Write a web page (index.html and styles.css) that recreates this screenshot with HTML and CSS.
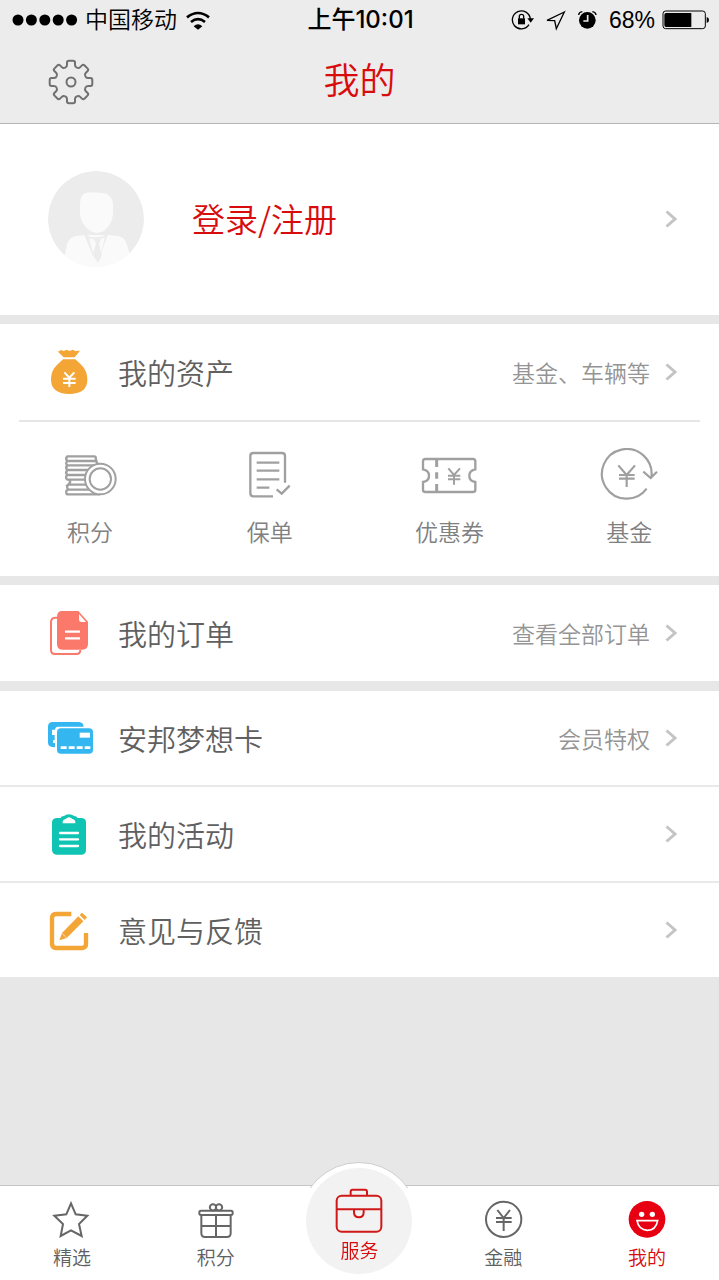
FILE: index.html
```html
<!DOCTYPE html>
<html lang="zh-CN">
<head>
<meta charset="utf-8">
<meta name="viewport" content="width=device-width, initial-scale=1">
<title>我的</title>
<link rel="stylesheet" href="styles.css">
</head>
<body>
<header class="top">
  <div class="status">
    <div class="status-left">
      <svg class="signal" viewBox="0 0 66 12" aria-hidden="true"><circle cx="6" cy="6" r="5.5"/><circle cx="19.4" cy="6" r="5.5"/><circle cx="32.8" cy="6" r="5.5"/><circle cx="46.2" cy="6" r="5.5"/><circle cx="59.6" cy="6" r="5.5"/></svg>
      <span>中国移动</span>
      <svg class="wifi" viewBox="558 28 72 57" fill="none" stroke="#000" stroke-width="8" aria-hidden="true"><path d="M561 47Q594 21 627 47M573 61Q594 44 615 61"/><path d="M581 74Q594 62 607 74L594 84Z" fill="#000" stroke="none"/></svg>
    </div>
    <span class="time">上午10:01</span>
    <div class="status-right">
      <svg class="s-lock" viewBox="666 26 69 66" fill="none" stroke="#000" stroke-width="4" aria-hidden="true"><path d="M720 73A27 27 0 1 1 724 56"/><path d="M715 54H735L725 67Z" fill="#000" stroke="none"/><path d="M687 54H708V72H687Z" fill="#000" stroke="none"/><path d="M691 55V48Q691 42 697.500 42Q704 42 704 48V55"/></svg>
      <svg class="s-arrow" viewBox="768 26 63 63" fill="none" stroke="#000" stroke-width="4" aria-hidden="true"><path d="M826 32L774 57L797 58L802 82Z"/></svg>
      <svg class="s-alarm" viewBox="861 28 60 60" aria-hidden="true"><circle cx="892" cy="59" r="25"/><path d="M866 43Q867 34 877 33M907 33Q917 34 918 43" fill="none" stroke="#000" stroke-width="4"/><path d="M893 43V61H880" fill="none" stroke="#ececec" stroke-width="5"/></svg>
      <span>68%</span>
      <svg class="battery" viewBox="1113 29 141 60" aria-hidden="true"><rect x="1116" y="32" width="127" height="53" rx="8" fill="none" stroke="#000" stroke-width="3"/><path d="M1125 38H1201V80H1125Q1120 80 1120 75V43Q1120 38 1125 38ZM1247 50Q1254 52 1254 59Q1254 66 1247 68Z"/></svg>
    </div>
  </div>
  <div class="nav">
    <button class="settings" type="button" aria-label="设置">
      <svg viewBox="-23 -23 46 46" fill="none" stroke="#707070" stroke-width="2">
        <defs><path id="tooth" d="M-5.900-14.300Q-4-15-4-17V-19.500Q-4-21.300-2-21.300H2Q4-21.300 4-19.500V-17Q4-15 5.900-14.300"/></defs>
        <use href="#tooth"/><use href="#tooth" transform="rotate(45)"/><use href="#tooth" transform="rotate(90)"/><use href="#tooth" transform="rotate(135)"/><use href="#tooth" transform="rotate(180)"/><use href="#tooth" transform="rotate(225)"/><use href="#tooth" transform="rotate(270)"/><use href="#tooth" transform="rotate(315)"/>
        <circle r="4.500"/>
      </svg>
    </button>
    <h1>我的</h1>
  </div>
</header>

<main>
  <a class="profile" href="#login">
    <svg class="avatar" viewBox="0 0 96 96" aria-hidden="true">
      <defs><clipPath id="disc"><circle cx="48" cy="48" r="48"/></clipPath></defs>
      <g clip-path="url(#disc)"><circle cx="48" cy="48" r="48" fill="#ececec"/>
      <path d="M37 22Q48 20 59 23Q65 27 65 34V43Q64 53 57 59Q49 65 41 59Q33 53 32 43V33Q32 25 37 22Z" fill="#fafafa"/>
      <path d="M14 96L19 74Q20 67 28 65L37 64L60 64L70 65Q77 66 79 74L86 96Z" fill="#fafafa"/><path d="M36 63Q48 70 60 63L51 88L53 84L50 74L53 68H45L48 74L45 84L46 88Z" fill="#ececec"/><path d="M46 68H53L51 73L54 84L50 92L45 84L48 73Z" fill="#ececec"/><path d="M41 67L45 68L48 73L45 82ZM57 66L53 68L51 73L53 82Z" fill="#fafafa"/></g>
    </svg>
    <span class="login">登录/注册</span>
    <svg class="chevron" viewBox="0 0 12 18" aria-hidden="true"><path d="M1.500 1.500L10 9L1.500 16.500"/></svg>
  </a>

  <section class="card">
    <a class="row" href="#assets">
      <svg class="icon" viewBox="54 57 138 138" aria-hidden="true"><path d="M84 65L93 60L101 63L110 59L119 63L128 59L136 63L150 62L134 82H101ZM99 88H136L155 106Q172 122 172 151Q171 192 117 192Q64 191 63 150Q63 122 80 106Z" fill="#f3a536"/><path d="M103 127L118 143L133 127M118 143V171M99 146H137M99 159H137" fill="none" stroke="#fff" stroke-width="6"/></svg>
      <span class="name">我的资产</span><span class="hint">基金、车辆等</span>
      <svg class="chevron" viewBox="0 0 12 18" aria-hidden="true"><path d="M1.500 1.500L10 9L1.500 16.500"/></svg>
    </a>
    <nav class="grid" aria-label="我的资产">
      <a href="#points"><svg viewBox="90 354 180 162" aria-hidden="true"><path d="M112 379H193Q198 379 197 384L200 397Q205 402 201 406H112Q105 400 112 393Q105 386 112 379ZM112 393H198M112 406H190M112 406Q105 413 112 420H176M112 420Q105 428 112 435H171M112 435Q104 442 112 449H169M112 449H118Q124 457 115 464H172M115 464Q107 472 116 479H181M116 479Q107 480 109 487Q108 493 115 493H210" stroke-width="7"/><circle cx="211" cy="447" r="46" fill="#fff" stroke-width="6"/><circle cx="211" cy="447" r="32" stroke-width="6"/></svg><span>积分</span></a>
      <a href="#policy"><svg viewBox="27 54 180 162" aria-hidden="true"><path d="M126 199H67Q58 199 58 190V78Q58 69 67 69H153Q162 69 162 78V158M77 98H145M77 122H145M77 148H145M77 173H115" stroke-width="7"/><path d="M137 178L152 191L176 167" stroke-width="7"/></svg><span>保单</span></a>
      <a href="#coupon"><svg viewBox="567 54 180 162" aria-hidden="true"><path d="M586 87H729Q736 87 736 94V118Q718 121 718 137Q718 153 736 156V180Q736 186 729 186H586Q579 186 579 180V156Q597 153 597 137Q597 121 579 118V94Q579 87 586 87Z" stroke-width="7"/><path d="M620 89V111M620 127V146M620 162V185" stroke-width="9"/><path d="M655 115L672 135L690 115M672 135V164M654 137H691M654 148H691" stroke-width="6"/></svg><span>优惠券</span></a>
      <a href="#fund"><svg viewBox="294 324 180 162" aria-hidden="true"><path d="M437 446A74.500 74.500 0 1 1 451 412M427 395L449 414L468 395M352 376L377 405L402 376M377 405V441M354 405H401M354 416H401" stroke-width="6.500"/></svg><span>基金</span></a>
    </nav>
  </section>

  <section class="card">
    <a class="row" href="#orders">
      <svg class="icon" viewBox="54 60 138 138" aria-hidden="true"><path d="M84 83H75Q63 84 63 96V180Q63 192 75 192H139Q151 192 151 180" fill="none" stroke="#fb796b" stroke-width="6"/><path d="M96 63H145L174 95V162Q174 179 157 179H96Q81 179 81 162V80Q81 63 96 63Z" fill="#fb796b"/><path d="M147 72V89Q147 95 153 96H168Z" fill="#fff"/><path d="M105 125H150M105 145H150" stroke="#fff" stroke-width="7"/></svg>
      <span class="name">我的订单</span><span class="hint">查看全部订单</span>
      <svg class="chevron" viewBox="0 0 12 18" aria-hidden="true"><path d="M1.500 1.500L10 9L1.500 16.500"/></svg>
    </a>
  </section>

  <section class="card lined">
    <a class="row" href="#card">
      <svg class="icon" viewBox="54 376 138 138" aria-hidden="true"><path d="M66 397H147Q160 398 161 411H84Q76 411 75 420H66V436H74V452H69V460H75V473Q55 473 54 460V410Q55 398 66 397Z" fill="#34b7f1"/><rect x="81" y="416" width="108" height="76" rx="12" fill="#34b7f1"/><path d="M149 429H180V444H149Z" fill="#fff"/><path d="M92 474H181" stroke="#fff" stroke-width="8" stroke-dasharray="18 6"/></svg>
      <span class="name">安邦梦想卡</span><span class="hint">会员特权</span>
      <svg class="chevron" viewBox="0 0 12 18" aria-hidden="true"><path d="M1.500 1.500L10 9L1.500 16.500"/></svg>
    </a>
    <a class="row" href="#events">
      <svg class="icon" viewBox="54 94 138 138" aria-hidden="true"><path d="M92 115Q93 109 102 109Q107 104 117 104Q127 104 132 109Q141 109 142 115H155Q168 116 168 128V211Q168 224 155 225H79Q67 224 66 211V128Q67 116 79 115Z" fill="#0fc4b3"/><path d="M98 131Q97 119 107 118Q117 107 127 118Q137 119 136 131Z" fill="#fff"/><path d="M90 160H144M90 179H144M90 199H144" stroke="#fff" stroke-width="7" stroke-linecap="round"/></svg>
      <span class="name">我的活动</span>
      <svg class="chevron" viewBox="0 0 12 18" aria-hidden="true"><path d="M1.500 1.500L10 9L1.500 16.500"/></svg>
    </a>
    <a class="row" href="#feedback">
      <svg class="icon" viewBox="54 381 138 138" aria-hidden="true"><path d="M124 402H78Q66 403 66 414V492Q67 503 78 504H157Q168 503 168 492V459" fill="none" stroke="#f3a536" stroke-width="13"/><path d="M88 481L96 459L145 409L160 424L110 474ZM149 405L156 398L171 412L164 420Z" fill="#f3a536"/><path d="M96 460L109 473" stroke="#fff" stroke-width="2"/></svg>
      <span class="name">意见与反馈</span>
      <svg class="chevron" viewBox="0 0 12 18" aria-hidden="true"><path d="M1.500 1.500L10 9L1.500 16.500"/></svg>
    </a>
  </section>
</main>

<nav class="tabs" aria-label="主导航">
  <a class="tab" href="#picks"><svg viewBox="153 147 126 126" aria-hidden="true"><path d="M213 160L227 193L262 197L237 222L245 258L213 241L182 258L189 222L163 197L199 193Z"/></svg><span>精选</span></a>
  <a class="tab" href="#gifts"><svg viewBox="584 147 126 126" aria-hidden="true"><rect x="597" y="182" width="100" height="13" rx="5"/><path d="M603 196V250Q603 261 614 261H680Q691 261 691 250V196M647 195V261M603 228H691"/><circle cx="638" cy="172" r="9.500"/><circle cx="656" cy="172" r="9.500"/></svg><span>积分</span></a>
  <a class="tab service" href="#service"><span class="bubble"><svg viewBox="134 110 150 144" aria-hidden="true"><rect x="142" y="136" width="134" height="108" rx="15"/><path d="M184 135V124Q184 118 190 118H227Q233 118 233 124V135M142 177H276M194 178V186Q194 201 209 201Q223 201 223 186V178"/></svg><span>服务</span></span></a>
  <a class="tab" href="#finance"><svg viewBox="67 147 126 126" aria-hidden="true"><circle cx="132" cy="208" r="53"/><path d="M113 180L132 204L151 180M132 204V243M109 204H156M109 216H156"/></svg><span>金融</span></a>
  <a class="tab active" href="#me" aria-current="page"><svg viewBox="498 147 126 126" aria-hidden="true"><circle cx="561" cy="208" r="55" fill="#e60012" stroke="none"/><circle cx="545" cy="193" r="8" fill="#fff" stroke="none"/><circle cx="577" cy="193" r="8" fill="#fff" stroke="none"/><path d="M531 212H593Q588 241 562 241Q536 240 531 212Z" stroke="#fff" stroke-width="5"/></svg><span>我的</span></a>
</nav>
</body>
</html>
```
FILE: styles.css
```css
* { box-sizing: border-box; }

body {
  margin: 0;
  min-height: 100vh;
  display: flex;
  flex-direction: column;
  background: #e7e7e7;
  color: #606060;
  font-family: "Noto Sans CJK SC", sans-serif;
  font-weight: 350;
}

a { color: inherit; text-decoration: none; }
svg { display: block; flex: none; }

/* Status bar and title */
.top { background: #ececec; border-bottom: 1px solid #b4b4b4; }

.status {
  display: grid;
  grid-template-columns: 1fr auto 1fr;
  align-items: center;
  height: 40px;
  padding: 0 10px 0 12px;
  color: #000;
  font-family: "Liberation Sans", "Noto Sans CJK SC", sans-serif;
  font-size: 23px;
  line-height: 40px;
}
.status-left, .status-right { display: flex; align-items: center; gap: 7px; }
.status-right { justify-content: flex-end; }
.time { font-family: Inter, "Noto Sans CJK SC", sans-serif; font-size: 24px; font-weight: 500; }
.signal { width: 66px; height: 12px; }
.wifi { width: 24px; height: 19px; margin-left: 2px; }
.s-lock { width: 23px; height: 22px; }
.s-arrow { width: 21px; height: 21px; margin: 0 4px; }
.s-alarm { width: 20px; height: 20px; margin-right: 5px; }
.battery { width: 47px; height: 20px; }

.nav {
  display: grid;
  grid-template-columns: 1fr auto 1fr;
  align-items: center;
  height: 83px;
  padding: 0 48px;
}
.nav h1 { margin: 0; color: #d80c0c; font-size: 36px; line-height: 48px; font-weight: 350; padding-bottom: 8px; }
.settings { width: 46px; padding: 0; border: 0; background: none; }

/* Account */
.profile {
  display: flex;
  align-items: center;
  height: 191px;
  padding: 0 42px 2px 48px;
  background: #fff;
}
.avatar { width: 96px; height: 96px; margin-right: 48px; }
.login { flex: 1; padding-bottom: 2px; color: #d80c0c; font-size: 33px; line-height: 48px; }

.chevron { width: 12px; height: 18px; fill: none; stroke: #c4c4c4; stroke-width: 3; }

/* Lists */
.card { margin-top: 9px; background: #fff; }
.row {
  display: flex;
  align-items: center;
  height: 96px;
  padding: 0 42px 0 48px;
}
.lined { margin-top: 10px; }
.lined .row:first-child { height: 94px; }
.lined .row + .row { border-top: 2px solid #e9e9e9; }
.icon { width: 46px; height: 46px; margin-right: 24px; }
.name { flex: 1; font-size: 29px; line-height: 40px; }
.hint { margin-right: 15px; color: #949494; font-size: 23px; line-height: 32px; }

.grid {
  position: relative;
  display: grid;
  grid-template-columns: repeat(4, 1fr);
  height: 156px;
  padding-top: 28px;
}
.grid::before {
  content: "";
  position: absolute;
  top: 0;
  left: 19px;
  right: 19px;
  height: 2px;
  background: #e6e6e6;
}
.grid a { display: flex; flex-direction: column; align-items: center; gap: 13px; color: #808080; font-size: 23px; line-height: 32px; }
.grid svg { width: 60px; height: 54px; fill: none; stroke: #a0a0a0; }

/* Bottom tabs */
.tabs {
  position: sticky;
  bottom: 0;
  display: grid;
  grid-template-columns: repeat(5, 1fr);
  height: 95px;
  margin-top: auto;
  border-top: 1px solid #c6c6c6;
  background: #fff;
}
.tab {
  display: flex;
  flex-direction: column;
  align-items: center;
  padding-top: 13px;
  font-size: 19px;
  line-height: 28px;
  gap: 2px;
}
.tab svg { width: 42px; height: 42px; fill: none; stroke: #666; stroke-width: 6; }
.tab.active, .tab.service { color: #d80c0c; }

.service { position: relative; padding: 0; }
.service::before {
  content: "";
  position: absolute;
  top: -24px;
  width: 118px;
  height: 118px;
  border: 1px solid #ccc;
  border-radius: 50%;
  background: #fff;
  clip-path: inset(0 0 94px 0);
}
.bubble {
  position: relative;
  display: flex;
  flex-direction: column;
  align-items: center;
  width: 106px;
  height: 106px;
  margin-top: -18px;
  padding-top: 19px;
  border-radius: 50%;
  background: #f2f2f2;
}
.bubble span { padding-top: 1px; }
.service svg { width: 50px; height: 48px; stroke: #d01818; }
```
